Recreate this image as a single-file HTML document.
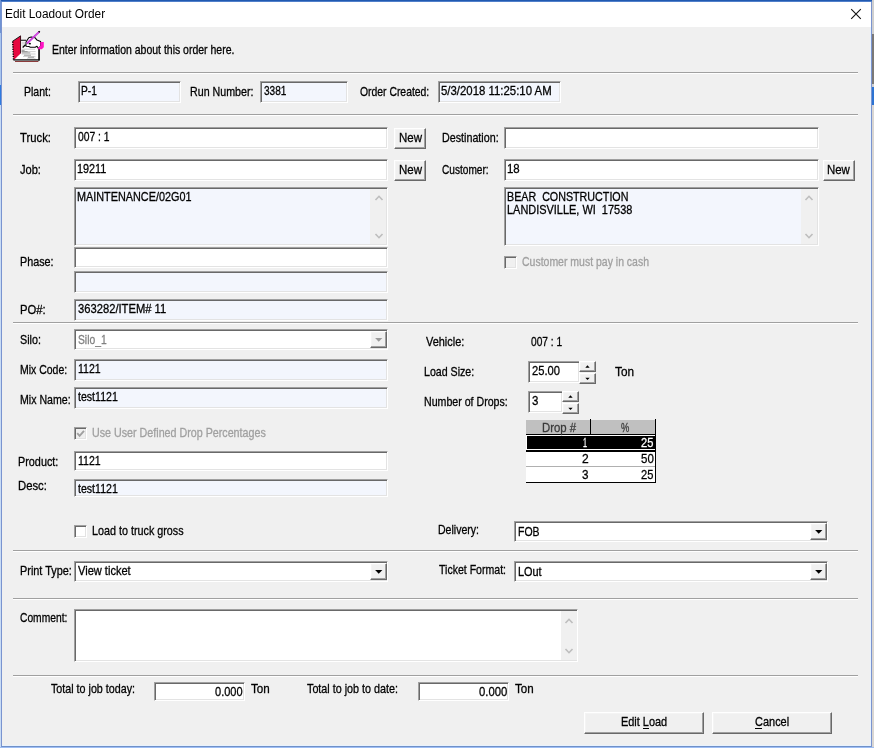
<!DOCTYPE html>
<html lang="en"><head><meta charset="utf-8"><title>Edit Loadout Order</title>
<style>
#txt{position:absolute;left:0;top:0;width:874px;height:748px;will-change:transform;}
html,body{margin:0;padding:0;}
body{width:874px;height:748px;overflow:hidden;position:relative;background:#f0f0f0;font-family:'Liberation Sans', Arial, sans-serif;}
#win{position:absolute;left:1px;top:0;width:869px;height:746px;background:#f0f0f0;border:1px solid #7a94d0;border-top:none;border-bottom-color:#7090c8;box-shadow:inset -1px -1px 0 #e8f2fd;}
.abs{position:absolute;display:block;}
.t{-webkit-text-stroke:0.3px currentColor;position:absolute;white-space:pre;transform-origin:0 0;font-family:'Liberation Sans', Arial, sans-serif;margin:0;padding:0;}
.fld{position:absolute;box-sizing:border-box;border:1px solid;border-color:#a0a0a0 #fff #fff #a0a0a0;box-shadow:inset 1px 1px 0 #696969, inset -1px -1px 0 #e3e3e3;}
.btn{position:absolute;box-sizing:border-box;background:#f0f0f0;border:1px solid;border-color:#fff #696969 #696969 #fff;box-shadow:inset -1px -1px 0 #a0a0a0, inset 1px 1px 0 #f4f4f4;}
.title{-webkit-text-stroke:0 !important;}
.sep{position:absolute;height:1px;background:#a0a0a0;box-shadow:0 1px 0 #fff;}
</style></head>
<body>
<div style="position:absolute;left:0px;top:0px;width:1px;height:748px;background:#c9dcf5;"></div>
<div style="position:absolute;left:0px;top:0px;width:1px;height:33px;background:#6f93d3;"></div>
<div style="position:absolute;left:0px;top:33px;width:1px;height:52px;background:#a9c6ee;"></div>
<div style="position:absolute;left:0px;top:85px;width:1px;height:20px;background:#2f7be0;"></div>
<div style="position:absolute;left:872px;top:0px;width:2px;height:748px;background:#d9d6d2;"></div>
<div style="position:absolute;left:872px;top:0px;width:2px;height:34px;background:#cfcfcf;"></div>
<div style="position:absolute;left:872px;top:34px;width:2px;height:50px;background:#7b7977;"></div>
<div style="position:absolute;left:872px;top:84px;width:2px;height:3px;background:#cfcfcf;"></div>
<div style="position:absolute;left:872px;top:87px;width:2px;height:18px;background:#2c73d2;"></div>
<div style="position:absolute;left:0px;top:747px;width:874px;height:1px;background:#9ebef4;"></div>
<div id="win"></div>
<div style="position:absolute;left:1px;top:0px;width:871px;height:1px;background:#2159b0;"></div>
<div style="position:absolute;left:1px;top:1px;width:871px;height:1px;background:#4f7fca;"></div>
<div style="position:absolute;left:2px;top:2px;width:869px;height:25px;background:#fff;"></div>
<svg class="abs" style="left:845px;top:7px" width="22" height="14" viewBox="0 0 22 14"><path d="M6.2 2.2 L15.8 11.8 M15.8 2.2 L6.2 11.8" stroke="#111" stroke-width="1.1" fill="none"/></svg>
<svg class="abs" style="left:10px;top:29px" width="38" height="35" viewBox="10 29 38 35">
<polygon points="20.8,40.2 26,40.2 38.6,49 38.6,59.8 14.5,59.8 20.8,53.4" fill="#fff"/>
<polygon points="20.6,36 12.6,41.4 13.5,60.3 20.6,53.5" fill="#e6083f"/>
<path d="M12.7 41.6 L13.5 60.2" stroke="#000" stroke-width="1.5" stroke-dasharray="1.1 1.3" fill="none"/>
<path d="M20.6 35.9 L12.4 41.4" stroke="#000" stroke-width="0.9" fill="none"/>
<path d="M20.55 35.8 V53.4" stroke="#30000c" stroke-width="0.9"/>
<path d="M20.9 40.25 H26.2" stroke="#000" stroke-width="1"/>
<path d="M13.4 59.9 H39.4" stroke="#000" stroke-width="1.25"/>
<path d="M15 61.5 H38.4" stroke="#8c3b3b" stroke-width="1"/>
<path d="M39.05 49 V60.5" stroke="#000" stroke-width="1.6"/>
<path d="M21.6 49.2 h13.4 M21.6 51.6 h14 M21.6 54 h14 M23 56.4 h12.5 M27 58.2 h8.5" stroke="#c9c9c9" stroke-width="0.9"/>
<path d="M21.6 50.4 h3 M21.6 51.6 h6 M21.8 52.9 h8.5 M24 55.2 h7 M28 57.2 h6" stroke="#8e8e8e" stroke-width="0.9"/>
<path d="M21.6 42.3 h3.6 M21.6 43.7 h3.6 M21.6 45.1 h3" stroke="#c4c4c4" stroke-width="0.8"/>
<path d="M26 42 L26 46.2 L28.8 46.6 L30.4 47.3 L35.2 47.3 L37 46.3 L38.4 48.6 L40.6 46 L40.6 41.6 L39.9 41.3 L37 40.1 L35 37.7 L31.2 36.9 L28.8 37.7 Z" fill="#fff" stroke="#000" stroke-width="1.05" stroke-linejoin="round"/>
<path d="M40.3 42 H43.8 V47.2 L41.8 49.3 H37.8 L38.6 47.6 L40.3 45.8 Z" fill="#ff12c4"/>
<rect x="28.8" y="42.9" width="2" height="1.5" fill="#000"/>
<path d="M26.9 43.5 L39.4 31.6" stroke="#c428d6" stroke-width="1.9"/>
<path d="M26.9 43.5 L39.4 31.6" stroke="#f4b4fa" stroke-width="0.7" stroke-dasharray="0.7 0.9"/>
<path d="M38.7 32.3 L39.7 31.3" stroke="#000" stroke-width="1.6"/>
<path d="M22.6 47.6 L25.6 44.8" stroke="#000" stroke-width="1.3"/>
</svg>
<div class="sep" style="left:13px;top:72px;width:845px"></div>
<div class="sep" style="left:13px;top:114px;width:845px"></div>
<div class="sep" style="left:13px;top:322px;width:845px"></div>
<div class="sep" style="left:13px;top:550px;width:845px"></div>
<div class="sep" style="left:13px;top:598px;width:845px"></div>
<div class="sep" style="left:13px;top:675px;width:845px"></div>
<div class="fld " style="left:78px;top:81px;width:103px;height:22px;background:#f3f6fd"></div>
<div class="fld " style="left:260px;top:81px;width:88px;height:22px;background:#f3f6fd"></div>
<div class="fld " style="left:438px;top:81px;width:123px;height:22px;background:#f3f6fd"></div>
<div class="fld " style="left:74px;top:127px;width:314px;height:22px;background:#fff"></div>
<div class="btn " style="left:394px;top:128px;width:32px;height:21px"></div>
<div class="fld " style="left:504px;top:127px;width:315px;height:22px;background:#fff"></div>
<div class="fld " style="left:74px;top:159px;width:314px;height:22px;background:#fff"></div>
<div class="btn " style="left:394px;top:160px;width:32px;height:21px"></div>
<div class="fld " style="left:504px;top:159px;width:315px;height:22px;background:#fff"></div>
<div class="btn " style="left:823px;top:160px;width:32px;height:21px"></div>
<div class="fld " style="left:74px;top:187px;width:314px;height:59px;background:#f3f6fd"></div>
<div style="position:absolute;left:370px;top:189px;width:16px;height:55px;background:#f0f0f0;"></div>
<svg class="abs" style="left:373.8px;top:194px" width="10" height="8" viewBox="0 0 10 8"><path d="M1.5 6 L5 2.3 L8.5 6" fill="none" stroke="#bdbdbd" stroke-width="1.6"/></svg>
<svg class="abs" style="left:373.8px;top:231.5px" width="10" height="8" viewBox="0 0 10 8"><path d="M1.5 2 L5 5.7 L8.5 2" fill="none" stroke="#bdbdbd" stroke-width="1.6"/></svg>
<div class="fld " style="left:504px;top:187px;width:315px;height:59px;background:#f3f6fd"></div>
<div style="position:absolute;left:801px;top:189px;width:16px;height:55px;background:#f0f0f0;"></div>
<svg class="abs" style="left:803.8px;top:194px" width="10" height="8" viewBox="0 0 10 8"><path d="M1.5 6 L5 2.3 L8.5 6" fill="none" stroke="#bdbdbd" stroke-width="1.6"/></svg>
<svg class="abs" style="left:803.8px;top:231.5px" width="10" height="8" viewBox="0 0 10 8"><path d="M1.5 2 L5 5.7 L8.5 2" fill="none" stroke="#bdbdbd" stroke-width="1.6"/></svg>
<div class="fld " style="left:74px;top:247px;width:314px;height:21px;background:#fff"></div>
<div class="fld " style="left:74px;top:271px;width:314px;height:22px;background:#f3f6fd"></div>
<div class="fld " style="left:74px;top:299px;width:314px;height:22px;background:#f3f6fd"></div>
<div class="fld" style="left:504px;top:256px;width:13px;height:13px;background:#f0f0f0"></div>
<div class="fld " style="left:74px;top:329px;width:314px;height:21px;background:#fff"></div>
<div class="btn " style="left:370px;top:331px;width:17px;height:17px"></div>
<svg class="abs" style="left:370px;top:331px" width="17" height="17" viewBox="0 0 17 17"><path d="M5.15 7.0 h7.2 l-3.6 3.8 z" fill="#9a9a9a"/></svg>
<div class="fld " style="left:74px;top:359px;width:314px;height:22px;background:#f3f6fd"></div>
<div class="fld " style="left:74px;top:387px;width:314px;height:22px;background:#f3f6fd"></div>
<div class="fld" style="left:74px;top:427px;width:13px;height:13px;background:#f0f0f0"></div>
<svg class="abs" style="left:74px;top:427px" width="13" height="13" viewBox="0 0 13 13"><path d="M3.2 6.2 L5.6 8.8 L10 3.8" fill="none" stroke="#a0a0a0" stroke-width="1.9"/></svg>
<div class="fld " style="left:74px;top:451px;width:314px;height:20px;background:#fff"></div>
<div class="fld " style="left:74px;top:479px;width:314px;height:18px;background:#f3f6fd"></div>
<div class="fld" style="left:74px;top:525px;width:13px;height:13px;background:#fff"></div>
<div class="fld " style="left:528px;top:361px;width:52px;height:22px;background:#fff"></div>
<div class="btn " style="left:579px;top:361px;width:17px;height:11px"></div>
<div class="btn " style="left:579px;top:373px;width:17px;height:11px"></div>
<svg class="abs" style="left:579px;top:361px" width="17" height="11" viewBox="0 0 17 11"><path d="M6.3 6.7 h4.4 l-2.2 -2.4 z" fill="#000"/></svg>
<svg class="abs" style="left:579px;top:373px" width="17" height="11" viewBox="0 0 17 11"><path d="M6.3 4.7 h4.4 l-2.2 2.4 z" fill="#000"/></svg>
<div class="fld " style="left:528px;top:391px;width:35px;height:22px;background:#fff"></div>
<div class="btn " style="left:562px;top:391px;width:17px;height:11px"></div>
<div class="btn " style="left:562px;top:403px;width:17px;height:11px"></div>
<svg class="abs" style="left:562px;top:391px" width="17" height="11" viewBox="0 0 17 11"><path d="M6.3 6.7 h4.4 l-2.2 -2.4 z" fill="#000"/></svg>
<svg class="abs" style="left:562px;top:403px" width="17" height="11" viewBox="0 0 17 11"><path d="M6.3 4.7 h4.4 l-2.2 2.4 z" fill="#000"/></svg>
<div class="abs" style="left:526px;top:419px;width:130px;height:64px">
<div class="abs" style="left:0;top:1px;width:129px;height:14px;background:#c0c0c0"></div>
<div class="abs" style="left:64px;top:0;width:1px;height:15px;background:#000"></div>
<div class="abs" style="left:0;top:15px;width:130px;height:1px;background:#000"></div>
<div class="abs" style="left:0;top:16px;width:129px;height:48px;background:#fff"></div>
<div class="abs" style="left:1px;top:17px;width:128px;height:13px;background:#000"></div>
<div class="abs" style="left:0;top:31px;width:130px;height:2px;background:#000"></div>
<div class="abs" style="left:0;top:47px;width:129px;height:1px;background:#b0b0b0"></div>
<div class="abs" style="left:0;top:63px;width:130px;height:1px;background:#000"></div>
<div class="abs" style="left:129px;top:0;width:1px;height:64px;background:#000"></div>
</div>
<div class="fld " style="left:514px;top:521px;width:314px;height:21px;background:#fff"></div>
<div class="btn " style="left:810px;top:523px;width:17px;height:17px"></div>
<svg class="abs" style="left:810px;top:523px" width="17" height="17" viewBox="0 0 17 17"><path d="M5.15 7.0 h7.2 l-3.6 3.8 z" fill="#000"/></svg>
<div class="fld " style="left:74px;top:561px;width:314px;height:21px;background:#fff"></div>
<div class="btn " style="left:370px;top:563px;width:17px;height:17px"></div>
<svg class="abs" style="left:370px;top:563px" width="17" height="17" viewBox="0 0 17 17"><path d="M5.15 7.0 h7.2 l-3.6 3.8 z" fill="#000"/></svg>
<div class="fld " style="left:514px;top:561px;width:314px;height:21px;background:#fff"></div>
<div class="btn " style="left:810px;top:563px;width:17px;height:17px"></div>
<svg class="abs" style="left:810px;top:563px" width="17" height="17" viewBox="0 0 17 17"><path d="M5.15 7.0 h7.2 l-3.6 3.8 z" fill="#000"/></svg>
<div class="fld " style="left:74px;top:609px;width:504px;height:53px;background:#fff"></div>
<div style="position:absolute;left:561px;top:611px;width:16px;height:49px;background:#f0f0f0;"></div>
<svg class="abs" style="left:563.8px;top:616.5px" width="10" height="8" viewBox="0 0 10 8"><path d="M1.5 6 L5 2.3 L8.5 6" fill="none" stroke="#bdbdbd" stroke-width="1.6"/></svg>
<svg class="abs" style="left:563.8px;top:647.2px" width="10" height="8" viewBox="0 0 10 8"><path d="M1.5 2 L5 5.7 L8.5 2" fill="none" stroke="#bdbdbd" stroke-width="1.6"/></svg>
<div class="fld " style="left:154px;top:682px;width:91px;height:19px;background:#fff"></div>
<div class="fld " style="left:418px;top:682px;width:91px;height:19px;background:#fff"></div>
<div class="btn " style="left:584px;top:712px;width:120px;height:22px"></div>
<div class="btn " style="left:712px;top:712px;width:120px;height:22px"></div>
<div style="position:absolute;left:643px;top:728px;width:5.5px;height:1px;background:#000;"></div>
<div style="position:absolute;left:755px;top:728px;width:7px;height:1px;background:#000;"></div>
<div id="txt">
<span class="t title" style="left:4.55px;top:8.00px;color:#000;font-size:12px;line-height:12px;transform:scaleX(0.9877)">Edit Loadout Order</span>
<span class="t " style="left:51.62px;top:43.00px;color:#000;font-size:13px;line-height:13px;transform:scaleX(0.8064)">Enter information about this order here.</span>
<label class="t " style="left:23.62px;top:85.00px;color:#000;font-size:13px;line-height:13px;transform:scaleX(0.8081)">Plant:</label>
<span class="t " style="left:81.44px;top:83.50px;color:#000;font-size:13px;line-height:13px;transform:scaleX(0.7845)">P-1</span>
<label class="t " style="left:189.60px;top:85.00px;color:#000;font-size:13px;line-height:13px;transform:scaleX(0.8206)">Run Number:</label>
<span class="t " style="left:263.71px;top:83.50px;color:#000;font-size:13px;line-height:13px;transform:scaleX(0.7759)">3381</span>
<label class="t " style="left:360.24px;top:85.00px;color:#000;font-size:13px;line-height:13px;transform:scaleX(0.7984)">Order Created:</label>
<span class="t " style="left:440.57px;top:83.50px;color:#000;font-size:13px;line-height:13px;transform:scaleX(0.8763)">5/3/2018 11:25:10 AM</span>
<label class="t " style="left:20.35px;top:131.00px;color:#000;font-size:13px;line-height:13px;transform:scaleX(0.8677)">Truck:</label>
<span class="t " style="left:77.77px;top:130.00px;color:#000;font-size:13px;line-height:13px;transform:scaleX(0.7932)">007 : 1</span>
<span class="t " style="left:398.63px;top:130.80px;color:#000;font-size:13px;line-height:13px;transform:scaleX(0.8837)">New</span>
<label class="t " style="left:441.60px;top:130.80px;color:#000;font-size:13px;line-height:13px;transform:scaleX(0.8251)">Destination:</label>
<label class="t " style="left:19.79px;top:162.50px;color:#000;font-size:13px;line-height:13px;transform:scaleX(0.8511)">Job:</label>
<span class="t " style="left:77.12px;top:162.00px;color:#000;font-size:13px;line-height:13px;transform:scaleX(0.8350)">19211</span>
<span class="t " style="left:398.63px;top:162.60px;color:#000;font-size:13px;line-height:13px;transform:scaleX(0.8837)">New</span>
<label class="t " style="left:442.23px;top:162.50px;color:#000;font-size:13px;line-height:13px;transform:scaleX(0.7776)">Customer:</label>
<span class="t " style="left:507.27px;top:162.00px;color:#000;font-size:13px;line-height:13px;transform:scaleX(0.8801)">18</span>
<span class="t " style="left:827.04px;top:162.50px;color:#000;font-size:13px;line-height:13px;transform:scaleX(0.8797)">New</span>
<span class="t " style="left:77.09px;top:190.20px;color:#000;font-size:13px;line-height:13px;transform:scaleX(0.8340)">MAINTENANCE/02G01</span>
<span class="t " style="left:506.60px;top:190.20px;color:#000;font-size:13px;line-height:13px;transform:scaleX(0.8241)">BEAR  CONSTRUCTION</span>
<span class="t " style="left:506.58px;top:202.80px;color:#000;font-size:13px;line-height:13px;transform:scaleX(0.8418)">LANDISVILLE, WI  17538</span>
<label class="t " style="left:19.59px;top:255.00px;color:#000;font-size:13px;line-height:13px;transform:scaleX(0.8300)">Phase:</label>
<label class="t " style="left:522.22px;top:254.80px;color:#a0a0a0;font-size:13px;line-height:13px;transform:scaleX(0.8064)">Customer must pay in cash</label>
<label class="t " style="left:19.55px;top:302.70px;color:#000;font-size:13px;line-height:13px;transform:scaleX(0.8677)">PO#:</label>
<span class="t " style="left:77.68px;top:301.70px;color:#000;font-size:13px;line-height:13px;transform:scaleX(0.8616)">363282/ITEM# 11</span>
<label class="t " style="left:19.60px;top:332.70px;color:#000;font-size:13px;line-height:13px;transform:scaleX(0.8276)">Silo:</label>
<span class="t " style="left:77.84px;top:332.70px;color:#808080;font-size:13px;line-height:13px;transform:scaleX(0.7914)">Silo_1</span>
<label class="t " style="left:19.62px;top:362.70px;color:#000;font-size:13px;line-height:13px;transform:scaleX(0.8066)">Mix Code:</label>
<span class="t " style="left:77.54px;top:361.60px;color:#000;font-size:13px;line-height:13px;transform:scaleX(0.8101)">1121</span>
<label class="t " style="left:19.61px;top:392.80px;color:#000;font-size:13px;line-height:13px;transform:scaleX(0.8141)">Mix Name:</label>
<span class="t " style="left:77.82px;top:390.30px;color:#000;font-size:13px;line-height:13px;transform:scaleX(0.8144)">test1121</span>
<label class="t " style="left:91.80px;top:426.00px;color:#a0a0a0;font-size:13px;line-height:13px;transform:scaleX(0.8236)">Use User Defined Drop Percentages</label>
<label class="t " style="left:17.79px;top:454.80px;color:#000;font-size:13px;line-height:13px;transform:scaleX(0.8334)">Product:</label>
<span class="t " style="left:77.54px;top:454.00px;color:#000;font-size:13px;line-height:13px;transform:scaleX(0.8101)">1121</span>
<label class="t " style="left:17.75px;top:478.50px;color:#000;font-size:13px;line-height:13px;transform:scaleX(0.8695)">Desc:</label>
<span class="t " style="left:77.82px;top:481.50px;color:#000;font-size:13px;line-height:13px;transform:scaleX(0.8144)">test1121</span>
<label class="t " style="left:92.09px;top:523.70px;color:#000;font-size:13px;line-height:13px;transform:scaleX(0.8288)">Load to truck gross</label>
<label class="t " style="left:426.05px;top:334.80px;color:#000;font-size:13px;line-height:13px;transform:scaleX(0.8413)">Vehicle:</label>
<span class="t " style="left:530.97px;top:334.80px;color:#000;font-size:13px;line-height:13px;transform:scaleX(0.7831)">007 : 1</span>
<label class="t " style="left:423.61px;top:364.50px;color:#000;font-size:13px;line-height:13px;transform:scaleX(0.8177)">Load Size:</label>
<span class="t " style="left:531.71px;top:364.00px;color:#000;font-size:13px;line-height:13px;transform:scaleX(0.8617)">25.00</span>
<span class="t " style="left:614.84px;top:364.80px;color:#000;font-size:13px;line-height:13px;transform:scaleX(0.9043)">Ton</span>
<label class="t " style="left:423.61px;top:394.80px;color:#000;font-size:13px;line-height:13px;transform:scaleX(0.8166)">Number of Drops:</label>
<span class="t " style="left:532.17px;top:394.00px;color:#000;font-size:13px;line-height:13px;transform:scaleX(0.8822)">3</span>
<span class="t " style="left:541.55px;top:421.10px;color:#3a3a3a;font-size:13px;line-height:13px;transform:scaleX(0.8741)">Drop #</span>
<span class="t " style="left:620.59px;top:421.10px;color:#3a3a3a;font-size:13px;line-height:13px;transform:scaleX(0.7200)">%</span>
<span class="t " style="left:583.21px;top:436.00px;color:#fff;font-size:13px;line-height:13px;transform:scaleX(0.5543)">1</span>
<span class="t " style="left:641.41px;top:436.00px;color:#fff;font-size:13px;line-height:13px;transform:scaleX(0.8557)">25</span>
<span class="t " style="left:582.28px;top:452.00px;color:#000;font-size:13px;line-height:13px;transform:scaleX(0.9259)">2</span>
<span class="t " style="left:641.35px;top:452.00px;color:#000;font-size:13px;line-height:13px;transform:scaleX(0.8878)">50</span>
<span class="t " style="left:582.47px;top:468.00px;color:#000;font-size:13px;line-height:13px;transform:scaleX(0.8977)">3</span>
<span class="t " style="left:641.41px;top:468.00px;color:#000;font-size:13px;line-height:13px;transform:scaleX(0.8557)">25</span>
<label class="t " style="left:437.81px;top:522.80px;color:#000;font-size:13px;line-height:13px;transform:scaleX(0.8118)">Delivery:</label>
<span class="t " style="left:517.82px;top:524.50px;color:#000;font-size:13px;line-height:13px;transform:scaleX(0.8057)">FOB</span>
<label class="t " style="left:19.59px;top:564.00px;color:#000;font-size:13px;line-height:13px;transform:scaleX(0.8367)">Print Type:</label>
<span class="t " style="left:77.85px;top:564.00px;color:#000;font-size:13px;line-height:13px;transform:scaleX(0.8513)">View ticket</span>
<label class="t " style="left:439.36px;top:563.30px;color:#000;font-size:13px;line-height:13px;transform:scaleX(0.8115)">Ticket Format:</label>
<span class="t " style="left:517.78px;top:564.80px;color:#000;font-size:13px;line-height:13px;transform:scaleX(0.8387)">LOut</span>
<label class="t " style="left:20.23px;top:611.00px;color:#000;font-size:13px;line-height:13px;transform:scaleX(0.7896)">Comment:</label>
<label class="t " style="left:51.05px;top:682.00px;color:#000;font-size:13px;line-height:13px;transform:scaleX(0.8244)">Total to job today:</label>
<span class="t " style="left:215.45px;top:685.20px;color:#000;font-size:13px;line-height:13px;transform:scaleX(0.8477)">0.000</span>
<span class="t " style="left:251.04px;top:682.00px;color:#000;font-size:13px;line-height:13px;transform:scaleX(0.8945)">Ton</span>
<label class="t " style="left:307.35px;top:682.00px;color:#000;font-size:13px;line-height:13px;transform:scaleX(0.8282)">Total to job to date:</label>
<span class="t " style="left:479.25px;top:685.20px;color:#000;font-size:13px;line-height:13px;transform:scaleX(0.8698)">0.000</span>
<span class="t " style="left:514.84px;top:682.00px;color:#000;font-size:13px;line-height:13px;transform:scaleX(0.8896)">Ton</span>
<span class="t ul1" style="left:620.78px;top:715.20px;color:#000;font-size:13px;line-height:13px;transform:scaleX(0.8406)">Edit Load</span>
<span class="t ul2" style="left:754.91px;top:715.20px;color:#000;font-size:13px;line-height:13px;transform:scaleX(0.8442)">Cancel</span>
</div>
</body></html>
